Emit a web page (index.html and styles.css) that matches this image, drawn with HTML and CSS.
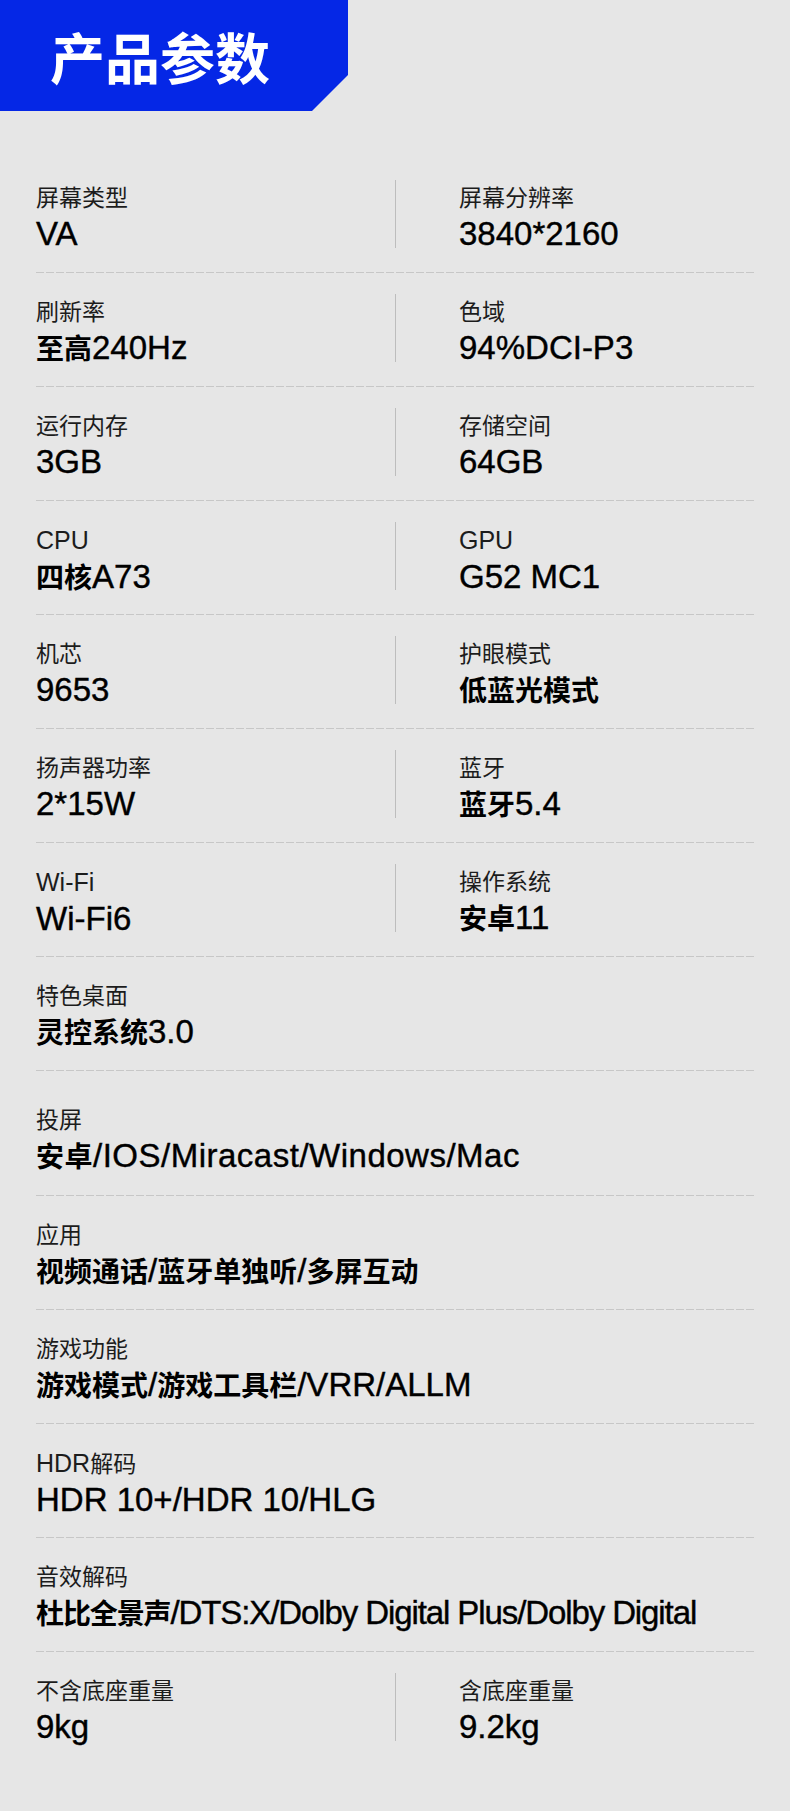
FILE: index.html
```html
<!DOCTYPE html>
<html lang="zh-CN">
<head>
  <meta charset="utf-8">
  <title>产品参数</title>
  <link rel="stylesheet" href="styles.css">
</head>
<body>
  <div class="banner">
    <h1>产品参数</h1>
  </div>

  <div class="specs">
    <div class="row pair">
      <div class="cell">
        <div class="label">屏幕类型</div>
        <div class="value">VA</div>
      </div>
      <div class="sep"></div>
      <div class="cell">
        <div class="label">屏幕分辨率</div>
        <div class="value">3840*2160</div>
      </div>
    </div>

    <div class="row pair">
      <div class="cell">
        <div class="label">刷新率</div>
        <div class="value"><span class="zh">至高</span>240Hz</div>
      </div>
      <div class="sep"></div>
      <div class="cell">
        <div class="label">色域</div>
        <div class="value">94%DCI-P3</div>
      </div>
    </div>

    <div class="row pair">
      <div class="cell">
        <div class="label">运行内存</div>
        <div class="value">3GB</div>
      </div>
      <div class="sep"></div>
      <div class="cell">
        <div class="label">存储空间</div>
        <div class="value">64GB</div>
      </div>
    </div>

    <div class="row pair">
      <div class="cell">
        <div class="label"><span class="en">CPU</span></div>
        <div class="value"><span class="zh">四核</span>A73</div>
      </div>
      <div class="sep"></div>
      <div class="cell">
        <div class="label"><span class="en">GPU</span></div>
        <div class="value">G52 MC1</div>
      </div>
    </div>

    <div class="row pair">
      <div class="cell">
        <div class="label">机芯</div>
        <div class="value">9653</div>
      </div>
      <div class="sep"></div>
      <div class="cell">
        <div class="label">护眼模式</div>
        <div class="value"><span class="zh">低蓝光模式</span></div>
      </div>
    </div>

    <div class="row pair">
      <div class="cell">
        <div class="label">扬声器功率</div>
        <div class="value">2*15W</div>
      </div>
      <div class="sep"></div>
      <div class="cell">
        <div class="label">蓝牙</div>
        <div class="value"><span class="zh">蓝牙</span>5.4</div>
      </div>
    </div>

    <div class="row pair">
      <div class="cell">
        <div class="label"><span class="en">Wi-Fi</span></div>
        <div class="value">Wi-Fi6</div>
      </div>
      <div class="sep"></div>
      <div class="cell">
        <div class="label">操作系统</div>
        <div class="value"><span class="zh">安卓</span>11</div>
      </div>
    </div>

    <div class="row">
      <div class="label">特色桌面</div>
      <div class="value"><span class="zh">灵控系统</span>3.0</div>
    </div>

    <div class="row tall">
      <div class="label">投屏</div>
      <div class="value wide"><span class="zh">安卓</span>/IOS/Miracast/Windows/Mac</div>
    </div>

    <div class="row">
      <div class="label">应用</div>
      <div class="value"><span class="zh">视频通话</span>/<span class="zh">蓝牙单独听</span>/<span class="zh">多屏互动</span></div>
    </div>

    <div class="row">
      <div class="label">游戏功能</div>
      <div class="value"><span class="zh">游戏模式</span>/<span class="zh">游戏工具栏</span>/VRR/ALLM</div>
    </div>

    <div class="row">
      <div class="label"><span class="en">HDR</span>解码</div>
      <div class="value">HDR 10+/HDR 10/HLG</div>
    </div>

    <div class="row">
      <div class="label">音效解码</div>
      <div class="value tight"><span class="zh">杜比全景声</span>/DTS:X/Dolby Digital Plus/Dolby Digital</div>
    </div>

    <div class="row pair last">
      <div class="cell">
        <div class="label">不含底座重量</div>
        <div class="value">9kg</div>
      </div>
      <div class="sep"></div>
      <div class="cell">
        <div class="label">含底座重量</div>
        <div class="value">9.2kg</div>
      </div>
    </div>
  </div>
</body>
</html>
```

FILE: styles.css
```css
/* 产品参数 */
body {
  margin: 0;
  background-color: #e6e6e6;
  font-family: "Liberation Sans", "Noto Sans CJK SC", sans-serif;
  color: #111;
}

.banner {
  width: 348px;
  height: 111px;
  background-color: #0527e6;
  clip-path: polygon(0 0, 348px 0, 348px 75px, 312px 111px, 0 111px);
  display: flex;
  align-items: center;
}

.banner h1 {
  margin: 0 0 0 50px;
  font-family: "Noto Sans CJK SC", sans-serif;
  font-size: 55px;
  font-weight: 700;
  line-height: 1;
  color: #fff;
}

.specs {
  margin: 0 36px;
  padding-top: 48px;
}

.row {
  box-sizing: border-box;
  height: 114.05px;
  padding-top: 24px;
  background-image: repeating-linear-gradient(90deg, #c7c7c7 0 8px, transparent 8px 10px);
  background-size: 100% 1px;
  background-position: left bottom;
  background-repeat: no-repeat;
}

.row.tall {
  height: 124.5px;
  padding-top: 34px;
}

.row.last {
  background-image: none;
}

.pair {
  display: grid;
  grid-template-columns: 359px 1px 1fr;
  padding-top: 0;
}

.pair .cell {
  padding-top: 24px;
}

.pair .cell:last-child {
  padding-left: 63px;
}

.sep {
  margin-top: 21px;
  height: 68px;
  background-color: #bdbdbd;
}

.label {
  font-size: 23px;
  line-height: 30px;
  color: #1c1c1c;
  white-space: nowrap;
}

.label .en {
  font-size: 25px;
}

.value {
  margin-top: 1px;
  font-size: 33px;
  line-height: 40px;
  color: #000;
  white-space: nowrap;
  -webkit-text-stroke: 0.4px #000;
}

.value .zh {
  font-family: "Noto Sans CJK SC", sans-serif;
  font-size: 28px;
  font-weight: 700;
  line-height: 1;
  -webkit-text-stroke: 0;
}

.value.wide {
  letter-spacing: 0.5px;
}

.value.tight {
  letter-spacing: -1.1px;
}
```
